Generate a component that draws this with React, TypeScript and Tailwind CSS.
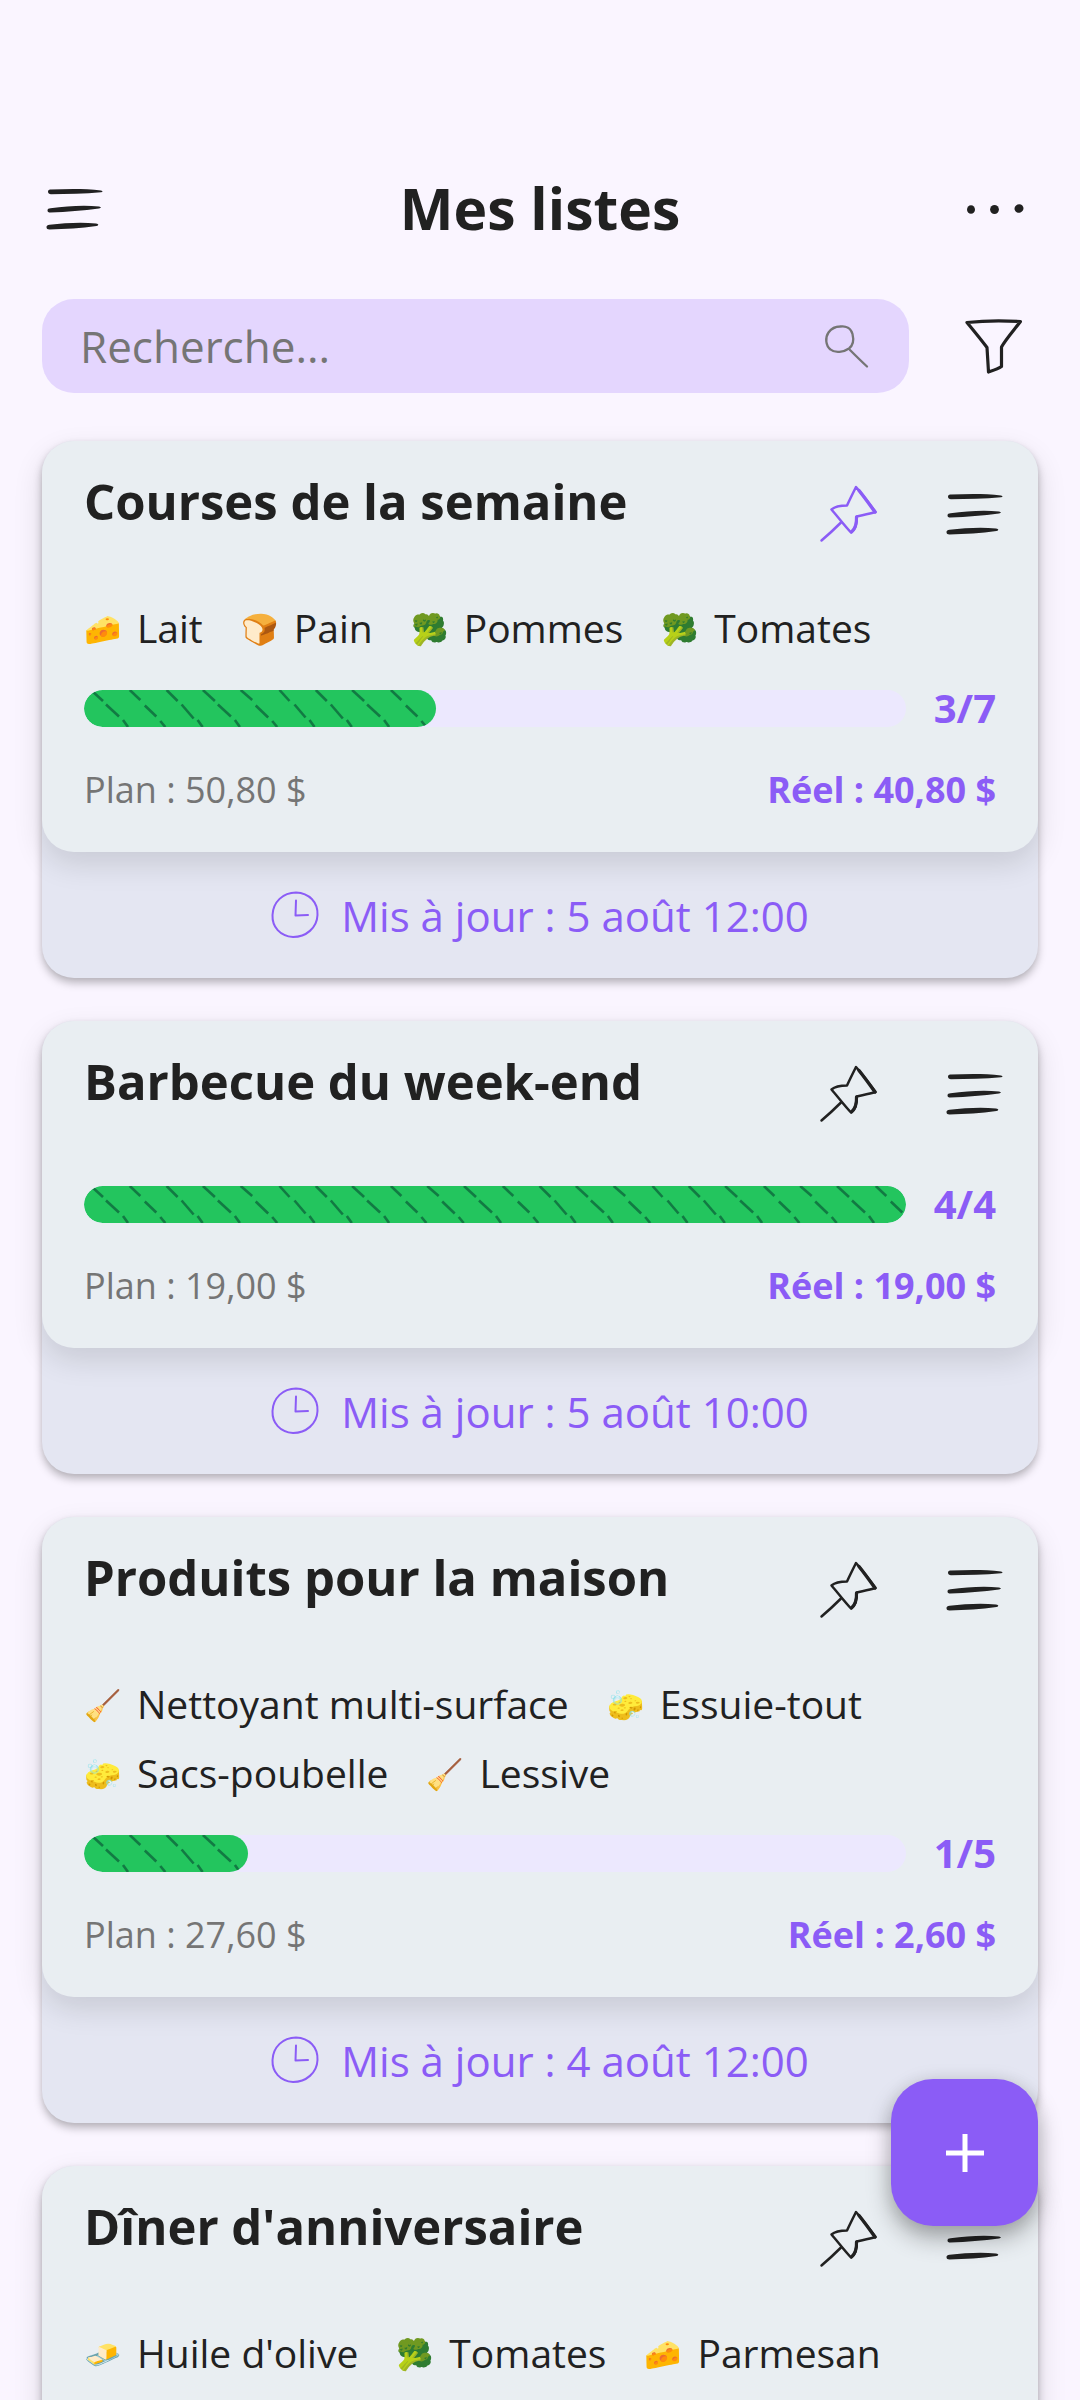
type Item = { icon: string; label: string };
type List = {
  title: string;
  pinned?: boolean;
  items: Item[];
  done?: number;
  total?: number;
  plan?: string;
  real?: string;
  updated?: string;
};

const LISTS: List[] = [
  {
    title: "Courses de la semaine",
    pinned: true,
    items: [
      { icon: "🧀", label: "Lait" },
      { icon: "🍞", label: "Pain" },
      { icon: "🥦", label: "Pommes" },
      { icon: "🥦", label: "Tomates" },
    ],
    done: 3,
    total: 7,
    plan: "50,80 $",
    real: "40,80 $",
    updated: "5 août 12:00",
  },
  {
    title: "Barbecue du week-end",
    items: [],
    done: 4,
    total: 4,
    plan: "19,00 $",
    real: "19,00 $",
    updated: "5 août 10:00",
  },
  {
    title: "Produits pour la maison",
    items: [
      { icon: "🧹", label: "Nettoyant multi-surface" },
      { icon: "🧽", label: "Essuie-tout" },
      { icon: "🧽", label: "Sacs-poubelle" },
      { icon: "🧹", label: "Lessive" },
    ],
    done: 1,
    total: 5,
    plan: "27,60 $",
    real: "2,60 $",
    updated: "4 août 12:00",
  },
  {
    title: "Dîner d'anniversaire",
    items: [
      { icon: "🧈", label: "Huile d'olive" },
      { icon: "🥦", label: "Tomates" },
      { icon: "🧀", label: "Parmesan" },
    ],
  },
];

function MenuIcon() {
  return (
    <svg viewBox="1 -3 64 64" className="size-16" fill="currentColor" aria-hidden="true">
      <path d="M7 12.5C7 10.800 8.500 10.600 10 10.500C26 10 44 9.500 60 11.500C62 12 62 13 60 13.300C44 15 26 15 10 15.200C8.200 15.200 7 14.200 7 12.500Z" />
      <path d="M6.500 31.500C6.400 29.800 7.800 29.400 9.500 29.200C26 27.200 42 26 58 27.500C60.500 28 60.500 29 58 29.500C42 31.500 26 33 9.500 33.500C7.500 33.500 6.600 33 6.500 31.500Z" />
      <path d="M5.500 48.300C5.300 46.500 6.800 46 8.500 45.800C24 44 40 43 55 44.500C58 45 58 46.500 55.500 47C40 49.300 24 50 8.500 50.500C6.500 50.500 5.600 50 5.500 48.300Z" />
    </svg>
  );
}

function DotsIcon() {
  return (
    <svg viewBox="0 0 64 64" className="size-16" fill="currentColor" aria-hidden="true">
      <ellipse cx="9" cy="33.500" rx="4" ry="4.300" />
      <ellipse cx="32.500" cy="33.500" rx="4.400" ry="4.500" />
      <ellipse cx="57" cy="32.500" rx="4.500" ry="4.200" transform="rotate(-20 57 32.500)" />
    </svg>
  );
}

function SearchIcon() {
  return (
    <svg viewBox="0 0 48 48" className="size-12 shrink-0" fill="none" stroke="currentColor" strokeWidth="2.300" strokeLinecap="round" aria-hidden="true">
      <path d="M19 4.500C25 3.500 30 6 31.500 12C33 18 32.500 23 28 26.500C23 30 14 31.500 9.500 27.500C4.500 23.500 4 15.500 7.500 10.500C10.500 6.500 14.500 4.500 19 4.500" />
      <path d="M29 28C34 33 40 39 46 44.500" />
    </svg>
  );
}

function FilterIcon() {
  return (
    <svg viewBox="0 0 64 64" className="size-16" fill="none" stroke="currentColor" strokeWidth="3.200" strokeLinejoin="round" strokeLinecap="round" aria-hidden="true">
      <path d="M5 8.500C23 6.500 41 6.500 58.500 7.500C52 16 44 25 39.500 33L39.500 52.500C36 55 31 56.500 26.500 58C26 50 25.500 42 25 33.500C19 25.500 12 17 5 8.500Z" />
    </svg>
  );
}

function PinIcon() {
  return (
    <svg viewBox="0 0 64 64" className="size-16" fill="none" stroke="currentColor" strokeLinejoin="round" strokeLinecap="round" strokeWidth="2.500" aria-hidden="true">
      <path d="M40 6C37 12 34 18 31 24.500C25 24.500 19 25.500 15.500 28.500C22 36 28 44 35 51.500C40 48 41 42 40.500 35.500C47 34 53 33 59.500 31C53 22 47 14 40 6Z" />
      <path d="M43 9.500C49 17 54 24 59 31" strokeWidth="3.400" />
      <path d="M40.500 36C40.800 43 39 48 35.500 51" strokeWidth="3.200" />
      <path d="M25 41.500C18.500 48 12 54 5.500 59.500" />
    </svg>
  );
}

function ClockIcon() {
  return (
    <svg viewBox="0 0 48 48" className="size-12" fill="none" stroke="currentColor" strokeWidth="2" strokeLinecap="round" strokeLinejoin="round" aria-hidden="true">
      <path d="M25 1.500C38 2 47 11 46.500 24C46 37 35 46 22 46C9 45 1 36 1.500 24C2 11 12 1.500 25 1.500Z" />
      <path d="M25 9.500L24.500 24.500L37 24" />
    </svg>
  );
}

const HATCH = Array.from({ length: 26 }, (_, i) => i);
const WOBBLE = [0, 3, 2, 0, 1, 4, 2, 0, 3, 1];

function Bar({ done, total }: { done: number; total: number }) {
  return (
    <div
      role="progressbar"
      aria-label="Articles achetés"
      aria-valuenow={done}
      aria-valuemax={total}
      className="h-[37px] min-w-0 flex-1 overflow-hidden rounded-full bg-[#ece8fe]"
    >
      <div className="h-full overflow-hidden rounded-full bg-[#23c55e]" style={{ width: `${(done / total) * 100}%` }}>
        <svg width="980" height="37" className="max-w-none" fill="none" stroke="#127a43" strokeWidth="2.600" aria-hidden="true">
          {HATCH.map((i) => {
            const x = 7 + i * 37.300;
            const w = WOBBLE[i % 10];
            return (
              <g key={i}>
                <path d={`M${x + w * 0.500} 0L${x + 12} ${11 - (w % 2)}`} />
                <path d={`M${x + 15 + w * 0.500} ${14.500 + (w % 2)}L${x + 28} ${26.500 + (w % 3)}`} />
                <path d={`M${x + 32} ${30 + (w % 2)}L${x + 37} 37`} />
              </g>
            );
          })}
        </svg>
      </div>
    </div>
  );
}

function ListCard({ list }: { list: List }) {
  return (
    <article className="shrink-0 rounded-[32px] bg-[#e4e6f2] shadow-[0_5px_8px_rgba(0,0,0,0.26),0_1px_4px_rgba(0,0,0,0.04)]">
      <div className="flex min-h-[327px] flex-col rounded-[32px] bg-[#e9eef2] px-[42px] pb-8 shadow-[0_12px_30px_rgba(0,0,0,0.12)]">
        <div className="flex h-[153px] items-start">
          <h2 className="min-w-0 flex-1 pt-7 text-[49px] leading-16 font-bold">{list.title}</h2>
          <div className="-mr-2.5 flex gap-[62px] pt-10">
            <button type="button" aria-label="Épingler" className={list.pinned ? "text-[#8b5cf6]" : ""}>
              <PinIcon />
            </button>
            <button type="button" aria-label="Menu de la liste">
              <MenuIcon />
            </button>
          </div>
        </div>
        {list.items.length > 0 && (
          <ul className="mb-[15px] flex flex-wrap gap-x-[38px]">
            {list.items.map((it) => (
              <li key={it.label} className="flex h-[69px] items-center gap-[17px] text-[39px]">
                <span className="w-9 text-[30px]" aria-hidden="true">{it.icon}</span>
                {it.label}
              </li>
            ))}
          </ul>
        )}
        {list.done !== undefined && list.total !== undefined && (
          <>
            <div className="flex h-15 items-center gap-7">
              <Bar done={list.done} total={list.total} />
              <span className="text-[40px] font-bold text-[#8b5cf6]">
                {list.done}/{list.total}
              </span>
            </div>
            <div className="mt-[22px] flex h-15 items-center justify-between text-[36px]">
              <span className="text-[#757575]">Plan : {list.plan}</span>
              <span className="font-bold text-[#8b5cf6]">Réel : {list.real}</span>
            </div>
          </>
        )}
      </div>
      {list.updated && (
        <div className="flex h-[126px] items-center justify-center gap-[22px] text-[42px] font-medium text-[#8b5cf6]">
          <ClockIcon />
          <span>Mis à jour : {list.updated}</span>
        </div>
      )}
    </article>
  );
}

export default function App() {
  return (
    <div className="flex h-screen flex-col overflow-hidden bg-[#faf5ff] font-['Open_Sans',sans-serif] text-[#212121]">
      <header className="grid grid-cols-[1fr_auto_1fr] items-center px-[42px] pt-[168px]">
        <button type="button" aria-label="Menu" className="justify-self-start">
          <MenuIcon />
        </button>
        <h1 className="text-[57px] leading-20 font-bold">Mes listes</h1>
        <button type="button" aria-label="Plus d'options" className="mr-3 justify-self-end">
          <DotsIcon />
        </button>
      </header>
      <div className="flex items-center gap-[53px] pt-[51px] pr-[54px] pl-[42px]">
        <label className="flex h-[94px] min-w-0 flex-1 items-center rounded-[32px] bg-[#e4d6fe] pr-10 pl-[38px] text-[#757575]">
          <input
            type="text"
            aria-label="Recherche"
            placeholder="Recherche..."
            className="min-w-0 flex-1 bg-transparent text-[44px] outline-none placeholder:text-[#757575]"
          />
          <SearchIcon />
        </label>
        <button type="button" aria-label="Filtrer">
          <FilterIcon />
        </button>
      </div>
      <main className="flex min-h-0 flex-1 flex-col gap-[43px] overflow-hidden px-[42px] pt-12">
        {LISTS.map((l) => (
          <ListCard key={l.title} list={l} />
        ))}
      </main>
      <button
        type="button"
        aria-label="Ajouter une liste"
        className="fixed right-[42px] bottom-[174px] flex size-[147px] items-center justify-center rounded-[42px] bg-[#8b5cf6] text-white shadow-[0_12px_24px_rgba(0,0,0,0.3),0_2px_20px_rgba(0,0,0,0.1)]"
      >
        <svg viewBox="0 0 38 38" className="size-[38px]" stroke="currentColor" strokeWidth="5" aria-hidden="true">
          <path d="M19 0V38M0 19H38" />
        </svg>
      </button>
    </div>
  );
}
